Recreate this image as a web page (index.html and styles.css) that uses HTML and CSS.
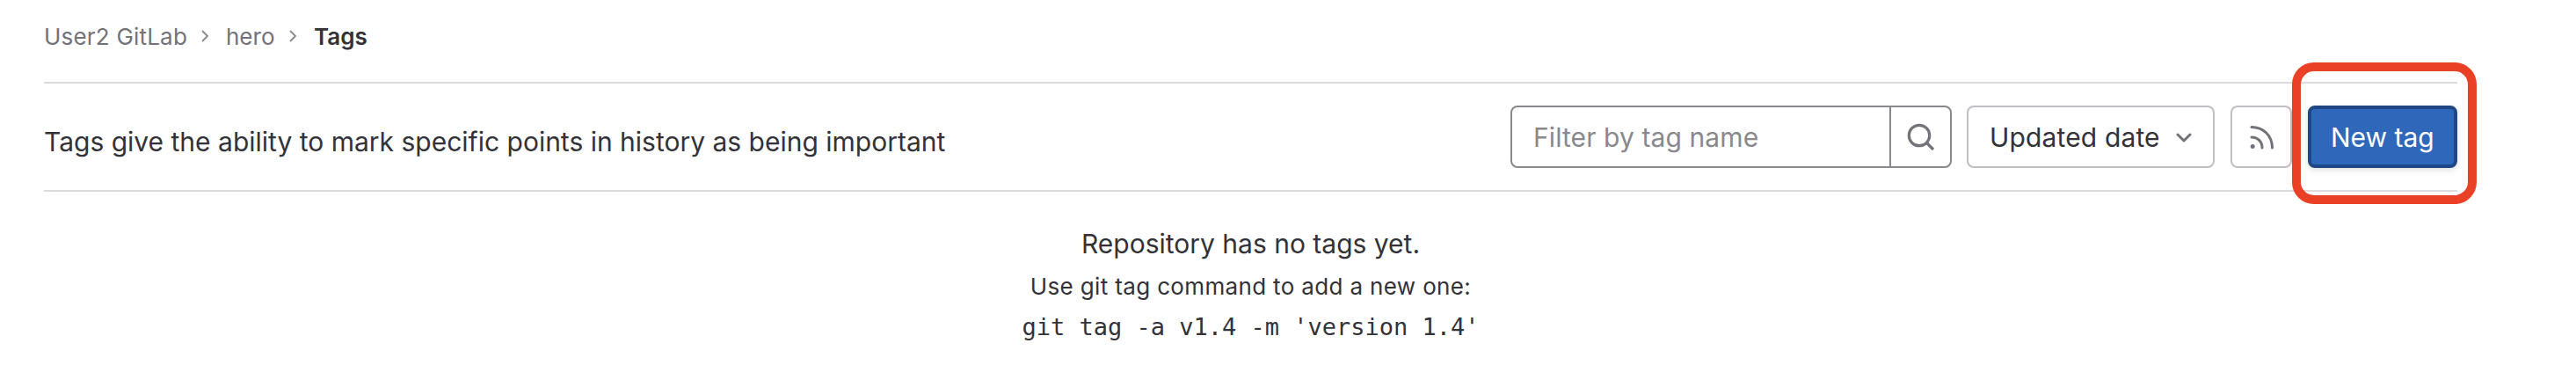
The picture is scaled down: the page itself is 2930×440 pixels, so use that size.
FILE: index.html
```html
<!DOCTYPE html>
<html lang="en">
<head>
<meta charset="utf-8">
<title>Tags</title>
<link rel="stylesheet" href="styles.css">
</head>
<body>
<main class="page">
  <nav class="breadcrumbs">
    <a class="crumb crumb-group">User2 GitLab</a>
    <svg class="crumb-sep" viewBox="0 0 10 16"><path d="M2 2l6 6-6 6"/></svg>
    <a class="crumb crumb-project">hero</a>
    <svg class="crumb-sep" viewBox="0 0 10 16"><path d="M2 2l6 6-6 6"/></svg>
    <span class="crumb crumb-current">Tags</span>
  </nav>
  <section class="toolbar">
    <p class="intro">Tags give the ability to mark specific points in history as being important</p>
    <div class="controls">
      <div class="search">
        <div class="search-field">Filter by tag name</div>
        <div class="search-button">
          <svg class="icon" viewBox="0 0 32 32"><circle cx="14" cy="14" r="11.7"/><path d="M22.5 22.5L30 30"/></svg>
        </div>
      </div>
      <div class="sort"><span>Updated date</span>
        <svg class="caret" viewBox="0 0 18 12"><path d="M2 2l7 7 7-7"/></svg>
      </div>
      <div class="feed">
        <svg class="feed-icon" viewBox="0 0 28 28"><path d="M2 2.5C15 2.5 25.5 12 25.5 26M2 14C9 14 14 19 14 26"/><circle class="dot" cx="3.2" cy="24.6" r="2.5"/></svg>
      </div>
      <div class="new-tag"><span>New tag</span><i class="highlight"></i></div>
    </div>
  </section>
  <section class="empty">
    <p class="empty-title">Repository has no tags yet.</p>
    <p class="empty-hint">Use git tag command to add a new one:</p>
    <code class="empty-code">git tag -a v1.4 -m 'version 1.4'</code>
  </section>
</main>
</body>
</html>
```

FILE: styles.css
```css
* { box-sizing: border-box; }
body {
  margin: 0;
  background: #fff;
  color: #333238;
  font-family: Inter, "Liberation Sans", sans-serif;
  font-size: 30px;
}
p { margin: 0; }
svg { display: block; fill: none; flex: none; }
.page { width: 2745px; margin-left: 50px; }
.breadcrumbs {
  display: flex;
  align-items: center;
  height: 95px;
  padding-bottom: 11px;
  border-bottom: 2px solid #dcdcde;
  font-size: 26px;
  white-space: nowrap;
}
.crumb { color: #737278; }
.crumb-group { width: 178px; letter-spacing: .2px; }
.crumb-project { width: 71px; margin-left: 19px; }
.crumb-current { margin-left: 19px; color: #333238; font-weight: 600; }
.crumb-sep { width: 10px; height: 16px; stroke: #89888d; stroke-width: 1.8; }
.toolbar {
  display: flex;
  justify-content: space-between;
  height: 123px;
  padding-top: 25px;
  border-bottom: 2px solid #dcdcde;
  white-space: nowrap;
}
.intro { line-height: 36px; padding-top: 23px; }
.controls { display: flex; align-items: flex-start; line-height: 36px; }
.search { display: flex; width: 502px; height: 71px; border: 2px solid #89888d; border-radius: 8px; }
.search-field { flex: 1; padding: 16px 0 0 24px; color: #89888d; letter-spacing: .1px; }
.search-button { width: 69px; border-left: 2px solid #89888d; padding: 18px 0 0 18px; }
.icon { width: 32px; height: 32px; stroke: #737278; stroke-width: 3.2; }
.sort {
  display: flex;
  width: 282px;
  height: 71px;
  margin-left: 17px;
  padding: 16px 24px 0 24px;
  justify-content: space-between;
  border: 2px solid #bfbfc3;
  border-radius: 8px;
  letter-spacing: .15px;
}
.caret { width: 18px; height: 12px; margin-top: 13px; stroke: #737278; stroke-width: 3; stroke-linecap: round; stroke-linejoin: round; }
.feed { width: 70px; height: 71px; margin-left: 18px; padding: 20px 0 0 20px; border: 2px solid #bfbfc3; border-radius: 8px; }
.feed-icon { width: 28px; height: 28px; stroke: #737278; stroke-width: 3; stroke-linecap: round; }
.dot { fill: #737278; stroke: none; }
.new-tag {
  position: relative;
  width: 170px;
  height: 71px;
  margin-left: 18px;
  padding: 14px 0 0 22px;
  border: 4px solid #1f4783;
  border-radius: 8px;
  background: #2f68bb;
  color: #fff;
  box-shadow: 0 3px 6px rgba(40, 39, 45, .12);
}
.highlight { position: absolute; left: -22px; top: -53px; width: 210px; height: 161px; border: 10px solid #ea4026; border-radius: 25px; }
.empty { text-align: center; padding-top: 41px; white-space: nowrap; }
.empty-title { line-height: 36px; }
.empty-hint { font-size: 26px; line-height: 32px; margin-top: 15px; letter-spacing: .35px; }
.empty-code { display: block; font: 27px/32px "DejaVu Sans Mono", monospace; margin-top: 14px; }
```
